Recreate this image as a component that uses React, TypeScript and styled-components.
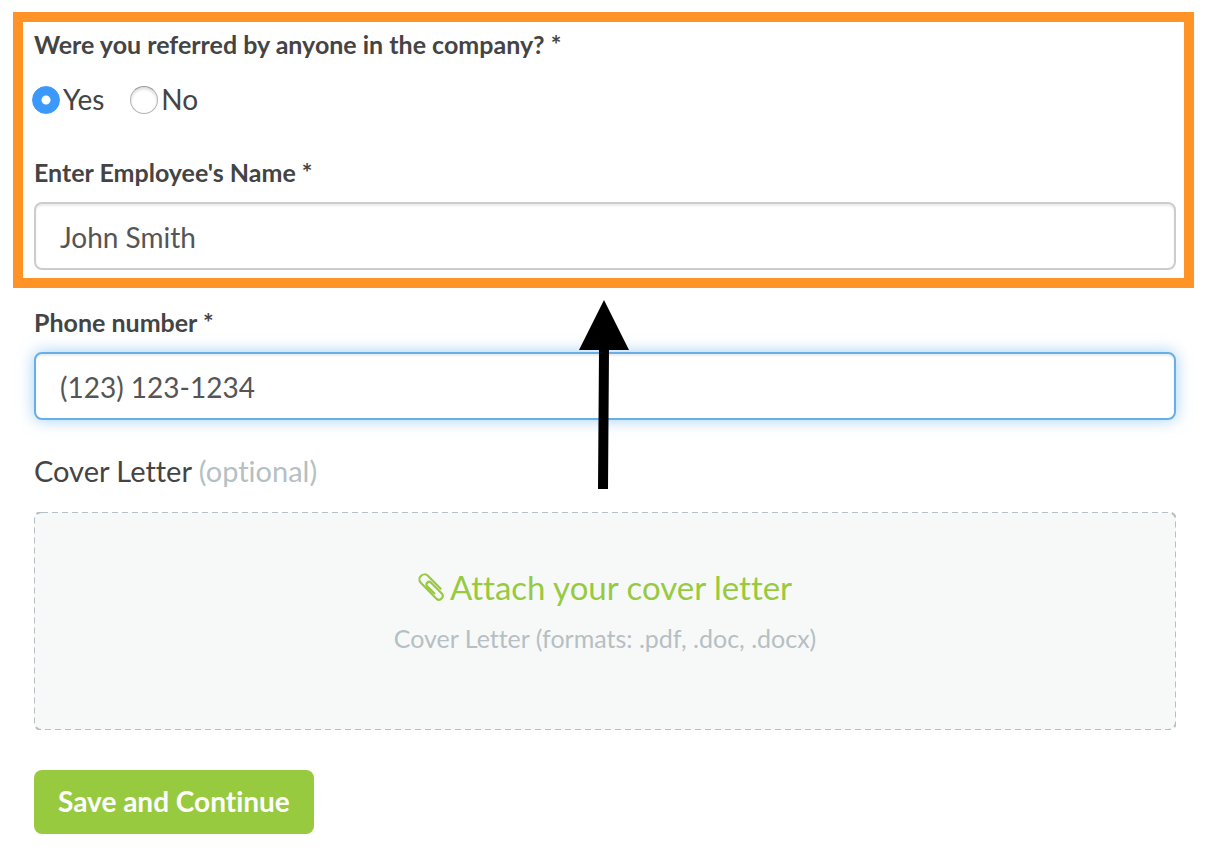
import React, { useState } from "react";
import styled, { createGlobalStyle, css } from "styled-components";

const GlobalStyle = createGlobalStyle`
  *, *::before, *::after { box-sizing: border-box; }
  body {
    margin: 0;
    background: #fff;
    color: #444;
    font-family: Lato, "Open Sans", sans-serif;
    font-size: 28px;
    line-height: 34px;
    font-variant-ligatures: none;
  }
  input, button { font: inherit; font-variant-ligatures: none; }
`;

const Form = styled.form`
  position: relative;
  padding: 12px 14px 34px 13px;
`;

const Highlight = styled.div`
  border: 10px solid #ff9326;
  padding: 6px 8px 8px 11px;
`;

const Fields = styled.div`
  padding: 18px 18px 0 21px;
`;

const Question = styled.fieldset`
  border: 0;
  margin: 0;
  padding: 0;
  min-width: 0;
`;

const heading = css`
  display: block;
  padding: 0;
  font-size: 25px;
  line-height: 32px;
  font-weight: 700;
`;

const Legend = styled.legend`
  ${heading}
`;

const FieldLabel = styled.label`
  ${heading}
`;

const Choices = styled.div`
  display: flex;
  gap: 26px;
  margin: 26px 0 42px -2px;
`;

const Choice = styled.label`
  display: flex;
  align-items: flex-start;
  gap: 3px;
  line-height: 26px;
`;

const Radio = styled.input`
  appearance: none;
  width: 28px;
  height: 28px;
  margin: 0;
  border: 1px solid #b4b4b4;
  border-top-color: #999;
  border-radius: 50%;
  background: #fff;
  box-shadow: inset 0 2px 3px rgba(0, 0, 0, 0.15);

  &:checked {
    border-color: #3b99fc;
    background: radial-gradient(circle, #fff 4px, #3b99fc 5px);
    box-shadow: none;
  }
`;

const TextInput = styled.input<{ $active?: boolean }>`
  display: block;
  width: 100%;
  height: 68px;
  margin-top: 14px;
  padding: 2px 24px 0;
  border: 2px solid ${(p) => (p.$active ? "#66afe9" : "#ccc")};
  border-radius: 8px;
  outline: 0;
  background: #fff;
  color: #555;
  box-shadow: inset 0 2px 2px rgba(0, 0, 0, 0.075)
    ${(p) => (p.$active ? ", 0 0 16px rgba(102, 175, 233, 0.6)" : "")};
`;

const CoverLabel = styled.label`
  display: block;
  margin: 34px 0 24px;
  font-size: 29px;
`;

const Optional = styled.span`
  color: #b6bfc3;
`;

const DropZone = styled.label`
  position: relative;
  display: flex;
  flex-direction: column;
  align-items: center;
  gap: 15px;
  padding: 55px 20px 76px;
  border-radius: 8px;
  background: #f7f9f9;
  cursor: pointer;
`;

const DashedOutline = styled.svg`
  position: absolute;
  inset: 0;
  width: 100%;
  height: 100%;
  overflow: hidden;
  pointer-events: none;
`;

const FileInput = styled.input`
  position: absolute;
  width: 1px;
  height: 1px;
  opacity: 0;
`;

const AttachLine = styled.span`
  display: flex;
  align-items: center;
  gap: 5px;
  color: #97ca3f;
  font-size: 33px;
  line-height: 40px;
`;

const Formats = styled.span`
  color: #b6bfc3;
  font-size: 25px;
  line-height: 32px;
`;

const SaveButton = styled.button`
  display: block;
  height: 64px;
  margin-top: 40px;
  padding: 0 24px 2px;
  border: 0;
  border-radius: 8px;
  background: #97ca3f;
  color: #fff;
  font-weight: 700;
  cursor: pointer;
`;

const Pointer = styled.svg`
  position: absolute;
  top: 300px;
  left: 50%;
  margin-left: -25px;
  pointer-events: none;
`;

function Paperclip() {
  return (
    <svg width="27" height="29" viewBox="24 27 81 87" fill="none" aria-hidden="true">
      <path
        d="M92 74 L53.6 35.4 A15 15 0 0 0 32.4 56.6 L80 105 A11.5 11.5 0 0 0 96 89 L62.5 55.5 A7.8 7.8 0 0 0 51.5 66.5 L73 88"
        stroke="#97ca3f"
        strokeWidth="6.5"
        strokeLinecap="round"
      />
    </svg>
  );
}

export default function App() {
  const [referred, setReferred] = useState("yes");
  const [name, setName] = useState("John Smith");
  const [phone, setPhone] = useState("(123) 123-1234");

  return (
    <>
      <GlobalStyle />
      <Form onSubmit={(e) => e.preventDefault()}>
        <Highlight>
          <Question>
            <Legend>Were you referred by anyone in the company? *</Legend>
            <Choices>
              <Choice>
                <Radio
                  type="radio"
                  name="referred"
                  checked={referred === "yes"}
                  onChange={() => setReferred("yes")}
                />
                Yes
              </Choice>
              <Choice>
                <Radio
                  type="radio"
                  name="referred"
                  checked={referred === "no"}
                  onChange={() => setReferred("no")}
                />
                No
              </Choice>
            </Choices>
          </Question>
          <FieldLabel htmlFor="employee">Enter Employee's Name *</FieldLabel>
          <TextInput id="employee" value={name} onChange={(e) => setName(e.target.value)} />
        </Highlight>
        <Fields>
          <FieldLabel htmlFor="phone">Phone number *</FieldLabel>
          <TextInput
            id="phone"
            type="tel"
            $active
            value={phone}
            onChange={(e) => setPhone(e.target.value)}
          />
          <CoverLabel htmlFor="cover">
            Cover Letter <Optional>(optional)</Optional>
          </CoverLabel>
          <DropZone>
            <DashedOutline aria-hidden="true">
              <rect
                width="100%"
                height="100%"
                rx="8"
                fill="none"
                stroke="#b6bfc3"
                strokeWidth="2"
                strokeDasharray="6 4"
              />
            </DashedOutline>
            <FileInput id="cover" type="file" accept=".pdf,.doc,.docx" />
            <AttachLine>
              <Paperclip />
              Attach your cover letter
            </AttachLine>
            <Formats>Cover Letter (formats: .pdf, .doc, .docx)</Formats>
          </DropZone>
          <SaveButton type="submit">Save and Continue</SaveButton>
        </Fields>
        <Pointer width="50" height="190" viewBox="0 0 50 190" aria-hidden="true">
          <path d="M25 0 L50 50 L30 50 L29 189 L19 189 L20 50 L0 50 Z" fill="#000" />
        </Pointer>
      </Form>
    </>
  );
}
